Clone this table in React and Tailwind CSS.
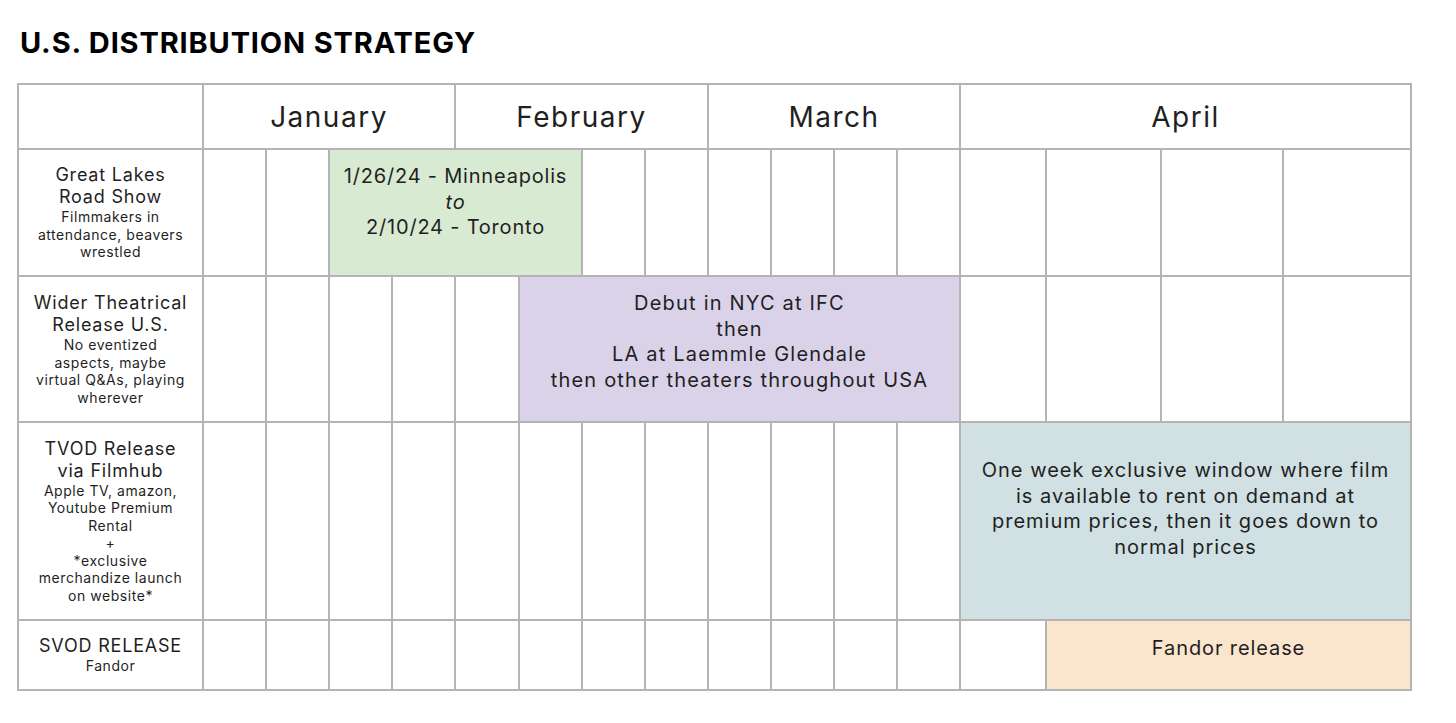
import React from "react";

const font = { fontFamily: "Inter, 'Liberation Sans', sans-serif" };

function Empty({ n }) {
  return Array.from({ length: n }).map((_, i) => <div key={i} className="bg-white" />);
}

function Label({ title, sub }) {
  return (
    <div className="bg-white flex flex-col items-center justify-center text-center text-[#1f1f1f] px-1">
      <div className="text-[18px] leading-[22px] tracking-[0.8px]">
        {title.map((t, i) => (
          <div key={i}>{t}</div>
        ))}
      </div>
      <div className="text-[14px] leading-[17.5px] tracking-[0.55px]">
        {sub.map((t, i) => (
          <div key={i}>{t}</div>
        ))}
      </div>
    </div>
  );
}

export default function App() {
  return (
    <div className="w-[1456px] h-[723px] bg-white" style={font}>
      <div className="pt-[27px] pl-[20px] h-[83px]">
        <h1 className="text-[29px] leading-[32px] font-bold text-black tracking-[0.85px]">
          U.S. DISTRIBUTION STRATEGY
        </h1>
      </div>
      <div className="ml-[17px] inline-grid bg-[#b4b4b4] p-[2px] gap-[2px] grid-cols-[183px_61px_61px_61px_61px_62px_61px_61px_61px_61px_61px_61px_61px_84px_113px_120px_126px] grid-rows-[63px_125px_144px_196px_68px]">
        {/* header */}
        <div className="bg-white" />
        <div className="bg-white col-span-4 flex items-center justify-center text-[28px] tracking-[1.5px] text-[#1f1f1f] pt-[1px]">January</div>
        <div className="bg-white col-span-4 flex items-center justify-center text-[28px] tracking-[1.5px] text-[#1f1f1f] pt-[1px]">February</div>
        <div className="bg-white col-span-4 flex items-center justify-center text-[28px] tracking-[1.5px] text-[#1f1f1f] pt-[1px]">March</div>
        <div className="bg-white col-span-4 flex items-center justify-center text-[28px] tracking-[1.5px] text-[#1f1f1f] pt-[1px]">April</div>

        {/* row 1 */}
        <Label title={["Great Lakes", "Road Show"]} sub={["Filmmakers in", "attendance, beavers", "wrestled"]} />
        <Empty n={2} />
        <div className="bg-[#d9ead3] col-span-4 flex flex-col items-center justify-center text-center text-[20px] leading-[25.5px] tracking-[0.8px] text-[#1f1f1f] pb-[20px]">
          <div>1/26/24 - Minneapolis</div>
          <div className="italic">to</div>
          <div>2/10/24 - Toronto</div>
        </div>
        <Empty n={10} />

        {/* row 2 */}
        <Label
          title={["Wider Theatrical", "Release U.S."]}
          sub={["No eventized", "aspects, maybe", "virtual Q&As, playing", "wherever"]}
        />
        <Empty n={5} />
        <div className="bg-[#d9d2e9] col-span-7 flex flex-col items-center justify-center text-center text-[20px] leading-[25.5px] tracking-[1.2px] text-[#1f1f1f] pb-[14px]">
          <div>Debut in NYC at IFC</div>
          <div>then</div>
          <div>LA at Laemmle Glendale</div>
          <div>then other theaters throughout USA</div>
        </div>
        <Empty n={4} />

        {/* row 3 */}
        <Label
          title={["TVOD Release", "via Filmhub"]}
          sub={[
            "Apple TV, amazon,",
            "Youtube Premium",
            "Rental",
            "+",
            "*exclusive",
            "merchandize launch",
            "on website*",
          ]}
        />
        <Empty n={12} />
        <div className="bg-[#d0e0e3] col-span-4 flex flex-col items-center justify-center text-center text-[20px] leading-[25.5px] tracking-[1px] text-[#1f1f1f] pb-[24px]">
          <div>One week exclusive window where film</div>
          <div>is available to rent on demand at</div>
          <div>premium prices, then it goes down to</div>
          <div>normal prices</div>
        </div>

        {/* row 4 */}
        <Label title={["SVOD RELEASE"]} sub={["Fandor"]} />
        <Empty n={13} />
        <div className="bg-[#fce5cd] col-span-3 flex items-center justify-center text-center text-[20px] tracking-[0.9px] text-[#1f1f1f] pb-[14px]">
          Fandor release
        </div>
      </div>
    </div>
  );
}
